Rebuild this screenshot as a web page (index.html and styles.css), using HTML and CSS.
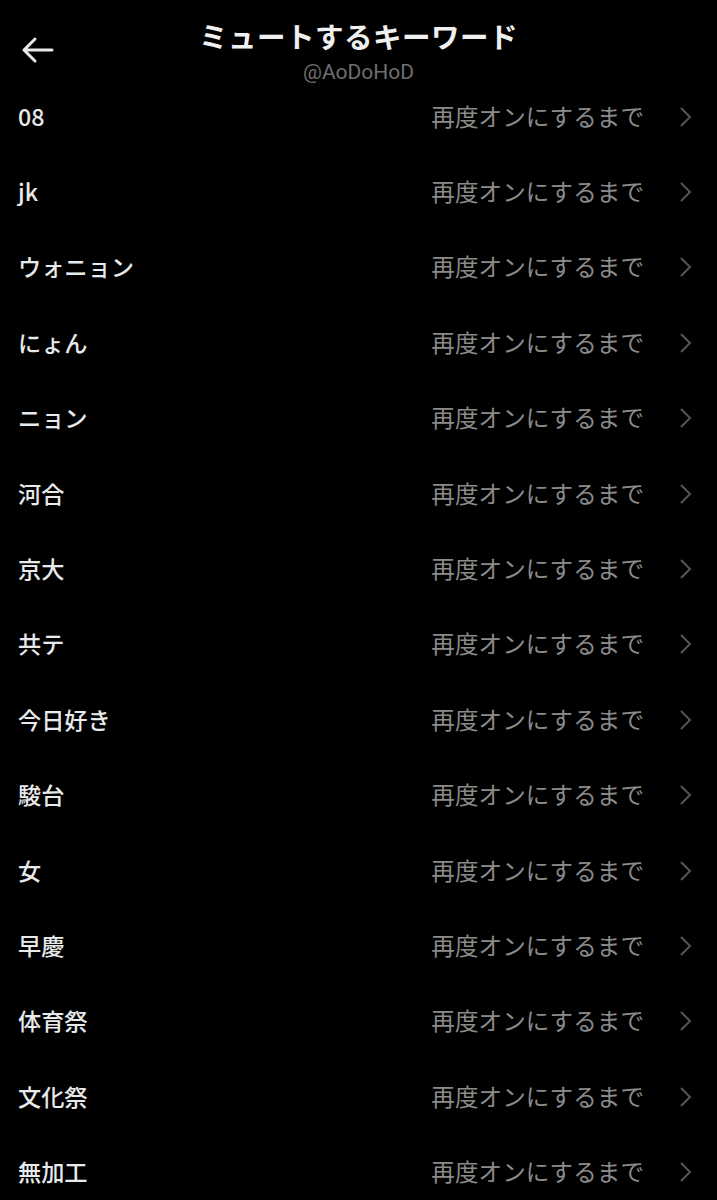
FILE: index.html
```html
<!DOCTYPE html>
<html lang="ja">
<head>
<meta charset="utf-8">
<link rel="stylesheet" href="styles.css">
</head>
<body>
<header class="header">
  <svg class="back" width="34" height="30" viewBox="0 0 34 30"><path d="M15 4 L4 15 L15 26 M4 15 H32" fill="none" stroke="#e7e9ea" stroke-width="3" stroke-linecap="round" stroke-linejoin="round"/></svg>
  <div class="title">ミュートするキーワード</div>
  <div class="handle">@AoDoHoD</div>
</header>
<ul class="list">
  <li class="row"><span class="kw">08</span><span class="dur">再度オンにするまで</span><svg class="chev" width="14" height="22" viewBox="0 0 14 22"><path d="M2 2 L11 11 L2 20" fill="none" stroke="#555" stroke-width="2"/></svg></li>
  <li class="row"><span class="kw">jk</span><span class="dur">再度オンにするまで</span><svg class="chev" width="14" height="22" viewBox="0 0 14 22"><path d="M2 2 L11 11 L2 20" fill="none" stroke="#555" stroke-width="2"/></svg></li>
  <li class="row"><span class="kw">ウォニョン</span><span class="dur">再度オンにするまで</span><svg class="chev" width="14" height="22" viewBox="0 0 14 22"><path d="M2 2 L11 11 L2 20" fill="none" stroke="#555" stroke-width="2"/></svg></li>
  <li class="row"><span class="kw">にょん</span><span class="dur">再度オンにするまで</span><svg class="chev" width="14" height="22" viewBox="0 0 14 22"><path d="M2 2 L11 11 L2 20" fill="none" stroke="#555" stroke-width="2"/></svg></li>
  <li class="row"><span class="kw">ニョン</span><span class="dur">再度オンにするまで</span><svg class="chev" width="14" height="22" viewBox="0 0 14 22"><path d="M2 2 L11 11 L2 20" fill="none" stroke="#555" stroke-width="2"/></svg></li>
  <li class="row"><span class="kw">河合</span><span class="dur">再度オンにするまで</span><svg class="chev" width="14" height="22" viewBox="0 0 14 22"><path d="M2 2 L11 11 L2 20" fill="none" stroke="#555" stroke-width="2"/></svg></li>
  <li class="row"><span class="kw">京大</span><span class="dur">再度オンにするまで</span><svg class="chev" width="14" height="22" viewBox="0 0 14 22"><path d="M2 2 L11 11 L2 20" fill="none" stroke="#555" stroke-width="2"/></svg></li>
  <li class="row"><span class="kw">共テ</span><span class="dur">再度オンにするまで</span><svg class="chev" width="14" height="22" viewBox="0 0 14 22"><path d="M2 2 L11 11 L2 20" fill="none" stroke="#555" stroke-width="2"/></svg></li>
  <li class="row"><span class="kw">今日好き</span><span class="dur">再度オンにするまで</span><svg class="chev" width="14" height="22" viewBox="0 0 14 22"><path d="M2 2 L11 11 L2 20" fill="none" stroke="#555" stroke-width="2"/></svg></li>
  <li class="row"><span class="kw">駿台</span><span class="dur">再度オンにするまで</span><svg class="chev" width="14" height="22" viewBox="0 0 14 22"><path d="M2 2 L11 11 L2 20" fill="none" stroke="#555" stroke-width="2"/></svg></li>
  <li class="row"><span class="kw">女</span><span class="dur">再度オンにするまで</span><svg class="chev" width="14" height="22" viewBox="0 0 14 22"><path d="M2 2 L11 11 L2 20" fill="none" stroke="#555" stroke-width="2"/></svg></li>
  <li class="row"><span class="kw">早慶</span><span class="dur">再度オンにするまで</span><svg class="chev" width="14" height="22" viewBox="0 0 14 22"><path d="M2 2 L11 11 L2 20" fill="none" stroke="#555" stroke-width="2"/></svg></li>
  <li class="row"><span class="kw">体育祭</span><span class="dur">再度オンにするまで</span><svg class="chev" width="14" height="22" viewBox="0 0 14 22"><path d="M2 2 L11 11 L2 20" fill="none" stroke="#555" stroke-width="2"/></svg></li>
  <li class="row"><span class="kw">文化祭</span><span class="dur">再度オンにするまで</span><svg class="chev" width="14" height="22" viewBox="0 0 14 22"><path d="M2 2 L11 11 L2 20" fill="none" stroke="#555" stroke-width="2"/></svg></li>
  <li class="row"><span class="kw">無加工</span><span class="dur">再度オンにするまで</span><svg class="chev" width="14" height="22" viewBox="0 0 14 22"><path d="M2 2 L11 11 L2 20" fill="none" stroke="#555" stroke-width="2"/></svg></li>
</ul>
</body>
</html>
```

FILE: styles.css
```css
html, body {
  margin: 0;
  padding: 0;
  background: #000;
  height: 1200px;
  overflow: hidden;
}
body {
  font-family: "Noto Sans CJK JP", "Noto Sans", sans-serif;
  color: #e7e9ea;
}
.header {
  position: relative;
  height: 78px;
  display: flex;
  flex-direction: column;
  align-items: center;
}
.back {
  position: absolute;
  left: 20px;
  top: 35px;
}
.title {
  margin-top: 16px;
  font-size: 28.5px;
  font-weight: 700;
  line-height: 40px;
  letter-spacing: 0.5px;
  color: #f0f0f0;
}
.handle {
  font-family: Roboto, "Noto Sans", sans-serif;
  font-size: 21px;
  line-height: 20px;
  margin-top: 6px;
  color: #6e6e6e;
}
.list {
  list-style: none;
  margin: 0;
  padding: 0;
}
.row {
  height: 75.4px;
  display: flex;
  align-items: center;
  padding: 0 24px 0 18px;
}
.kw {
  flex: 1;
  font-size: 23.2px;
  font-weight: 500;
  color: #e7e9ea;
}
.dur {
  font-size: 23.5px;
  color: #8b8b8b;
  margin-right: 35px;
  letter-spacing: 0.1px;
}
.chev {
  flex: none;
  margin-top: 2px;
}
```
